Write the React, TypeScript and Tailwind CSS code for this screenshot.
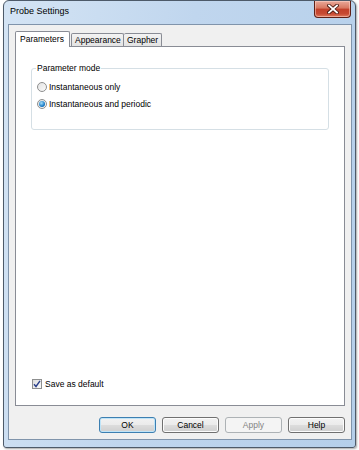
const ui = "font-['Liberation_Sans',Arial,sans-serif]";

function Radio({ checked }: { checked?: boolean }) {
  return (
    <span className="w-[10px] h-[10px] rounded-full border border-[#8e8f8f] bg-gradient-to-br from-[#e3e3e3] to-[#fafafa] flex items-center justify-center">
      {checked && (
        <span className="w-[6px] h-[6px] rounded-full bg-[radial-gradient(circle_at_40%_35%,#a6e0fb,#1c7dc7_60%,#0d4f8f)]" />
      )}
    </span>
  );
}

function Btn({ label, primary, disabled }: { label: string; primary?: boolean; disabled?: boolean }) {
  const cls = disabled
    ? "border-[#adb2b5] bg-[#f4f4f4] text-[#838383]"
    : primary
      ? "border-[#3c7fb1] bg-[linear-gradient(#f2f2f2_0%,#ebebeb_50%,#dddddd_50%,#cfcfcf_100%)] text-black shadow-[inset_0_0_0_1px_#bfe4f8]"
      : "border-[#707070] bg-[linear-gradient(#f2f2f2_0%,#ebebeb_50%,#dddddd_50%,#cfcfcf_100%)] text-black shadow-[inset_0_0_0_1px_#fcfcfc]";
  return (
    <button className={`w-[57px] h-[16px] rounded-[3px] border text-[8.5px] leading-none flex items-center justify-center ${cls}`}>
      {label}
    </button>
  );
}

export default function App() {
  return (
    <div className={`w-[359px] h-[450px] bg-white flex pl-[3px] pr-[3px] pb-[2px] ${ui}`}>
      <div className="flex-1 flex flex-col rounded-t-[6px] rounded-b-[3px] border border-[#4d5a69] bg-[linear-gradient(100deg,#d4e4f4_0%,#c0d6ee_45%,#b5cfea_100%)] shadow-[1px_1px_2px_rgba(0,0,0,0.35)]">
        {/* title bar */}
        <div className="h-[23px] flex items-start justify-between">
          <span className="pl-[6px] pt-[6px] text-[9px] leading-none text-black">Probe Settings</span>
          <button className="mr-[4px] w-[37px] h-[17px] rounded-b-[4px] border border-t-0 border-[#5e1f16] bg-[linear-gradient(#e9a99a_0%,#d7765f_45%,#c2402a_50%,#c74a33_80%,#e07b5f_100%)] flex items-center justify-center shadow-[inset_0_0_0_1px_rgba(255,220,210,0.5)]">
            <svg width="12" height="10" viewBox="0 0 12 10">
              <path d="M2 1.5 L10 8.5 M10 1.5 L2 8.5" stroke="#4a1a12" strokeWidth="3.6" strokeLinecap="square" />
              <path d="M2 1.5 L10 8.5 M10 1.5 L2 8.5" stroke="#ffffff" strokeWidth="1.8" strokeLinecap="square" />
            </svg>
          </button>
        </div>

        {/* client area */}
        <div className="ml-[4px] mr-[3px] mb-[7px] flex-1 flex flex-col border border-[#8094ab] bg-[#f0f0f0] px-[6px] pt-[6px]">
          {/* tabs */}
          <div className="h-[15px] flex items-end text-[8.5px] leading-none text-black">
            <div className="relative z-10 w-[55px] h-[16px] -mb-[1px] bg-white border border-b-0 border-[#898c95] rounded-t-[2px] pl-[4px] pt-[3px]">
              Parameters
            </div>
            <div className="w-[53px] h-[13px] ml-[1px] border border-b-0 border-[#898c95] rounded-t-[2px] bg-[linear-gradient(#f3f3f3,#e3e3e3)] pl-[3px] pt-[2px]">
              Appearance
            </div>
            <div className="w-[38px] h-[13px] border border-l-0 border-b-0 border-[#898c95] rounded-t-[2px] bg-[linear-gradient(#f3f3f3,#e3e3e3)] pl-[3px] pt-[2px]">
              Grapher
            </div>
          </div>

          {/* panel */}
          <div className="flex-1 flex flex-col bg-white border border-[#898c95] text-[8.5px] leading-none text-black">
            <fieldset className="mx-[15px] mt-[16px] h-[67px] border border-[#d5dfe5] rounded-[3px] px-[5px]">
              <legend className="px-[1px] -ml-[1px] text-[8.5px] leading-[10px]">Parameter mode</legend>
              <div className="mt-[9px] flex items-center gap-[2px]">
                <Radio />
                <span>Instantaneous only</span>
              </div>
              <div className="mt-[7px] flex items-center gap-[2px]">
                <Radio checked />
                <span>Instantaneous and periodic</span>
              </div>
            </fieldset>

            <div className="mt-auto mb-[16px] ml-[16px] flex items-center gap-[3px]">
              <span className="w-[10px] h-[10px] border border-[#8e8f8f] bg-gradient-to-br from-[#dcdcdc] to-[#fbfbfb] flex items-center justify-center">
                <svg width="8" height="8" viewBox="0 0 8 8">
                  <path d="M1 4.2 L3 6.5 L7 0.8" fill="none" stroke="#2a3f8a" strokeWidth="1.4" />
                </svg>
              </span>
              <span>Save as default</span>
            </div>
          </div>

          {/* buttons */}
          <div className="pt-[11px] pb-[6px] flex justify-end gap-[6px]">
            <Btn label="OK" primary />
            <Btn label="Cancel" />
            <Btn label="Apply" disabled />
            <Btn label="Help" />
          </div>
        </div>
      </div>
    </div>
  );
}
